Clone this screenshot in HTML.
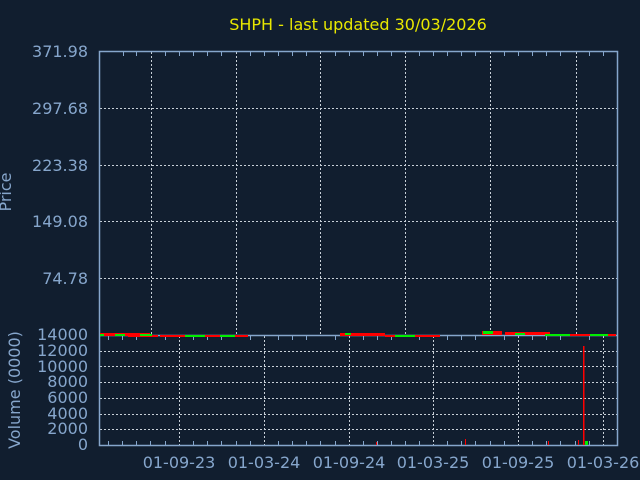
<!DOCTYPE html>
<html><head><meta charset="utf-8"><style>
html,body{margin:0;padding:0;background:#111e2f;}
svg{display:block}
text{font-family:"DejaVu Sans","Liberation Sans",sans-serif;}
</style></head><body>
<svg width="640" height="480" xmlns="http://www.w3.org/2000/svg">
<rect width="640" height="480" fill="#111e2f"/>
<text x="358" y="30" fill="#e8e800" font-size="16" text-anchor="middle">SHPH - last updated 30/03/2026</text>
<g fill="#86a6cc" font-size="16" text-anchor="end">
<text x="88" y="57">371.98</text>
<text x="88" y="114">297.68</text>
<text x="88" y="171">223.38</text>
<text x="88" y="227">149.08</text>
<text x="88" y="284">74.78</text>
<text x="88" y="340">14000</text>
<text x="88" y="356">12000</text>
<text x="88" y="372">10000</text>
<text x="88" y="387">8000</text>
<text x="88" y="403">6000</text>
<text x="88" y="419">4000</text>
<text x="88" y="434">2000</text>
<text x="88" y="450">0</text>
</g>
<g fill="#86a6cc" font-size="16" text-anchor="middle">
<text x="179" y="468">01-09-23</text>
<text x="264" y="468">01-03-24</text>
<text x="349" y="468">01-09-24</text>
<text x="433" y="468">01-03-25</text>
<text x="518" y="468">01-09-25</text>
<text x="603" y="468">01-03-26</text>
<text transform="translate(11,192) rotate(-90)">Price</text>
<text transform="translate(20,390) rotate(-90)">Volume (0000)</text>
</g>
<g stroke="#c8d0d8" stroke-dasharray="2,2" stroke-width="1" fill="none">
<path d="M151.5 52V335M236.5 52V335M320.5 52V335M405.5 52V335M490.5 52V335M576.5 52V335"/>
<path d="M100 108.5H617M100 165.5H617M100 221.5H617M100 278.5H617"/>
<path d="M179.5 336V445M264.5 336V445M349.5 336V445M433.5 336V445M518.5 336V445M603.5 336V445"/>
<path d="M100 351.5H617M100 366.5H617M100 382.5H617M100 398.5H617M100 414.5H617M100 429.5H617"/>
</g>
<g stroke="#86a6cc" stroke-width="1.5" fill="none">
<rect x="99.5" y="51.5" width="518" height="394"/>
<path d="M99 335.5H618"/>
</g>
<g stroke="#86a6cc" stroke-width="1">
<path d="M108.5 335V340M122.5 335V340M136.5 335V340M165.5 335V340M193.5 335V340M207.5 335V340M221.5 335V340M250.5 335V340M278.5 335V340M292.5 335V340M306.5 335V340M335.5 335V340M363.5 335V340M377.5 335V340M391.5 335V340M419.5 335V340M447.5 335V340M461.5 335V340M475.5 335V340M504.5 335V340M532.5 335V340M546.5 335V340M560.5 335V340M589.5 335V340"/>
<path d="M108.5 445V441M122.5 445V441M136.5 445V441M150.5 445V441M165.5 445V441M193.5 445V441M207.5 445V441M221.5 445V441M236.5 445V441M250.5 445V441M278.5 445V441M292.5 445V441M306.5 445V441M320.5 445V441M335.5 445V441M363.5 445V441M377.5 445V441M391.5 445V441M405.5 445V441M419.5 445V441M447.5 445V441M461.5 445V441M475.5 445V441M490.5 445V441M504.5 445V441M532.5 445V441M546.5 445V441M560.5 445V441M575.5 445V441M589.5 445V441"/>
<path d="M123.5 52V56M136.5 52V56M165.5 52V56M179.5 52V56M193.5 52V56M207.5 52V56M221.5 52V56M250.5 52V56M264.5 52V56M278.5 52V56M292.5 52V56M306.5 52V56M335.5 52V56M349.5 52V56M363.5 52V56M377.5 52V56M391.5 52V56M419.5 52V56M433.5 52V56M447.5 52V56M461.5 52V56M475.5 52V56M504.5 52V56M518.5 52V56M532.5 52V56M546.5 52V56M560.5 52V56M589.5 52V56M603.5 52V56"/>
</g>
<g fill="#ff0000">
<rect x="100" y="333" width="50" height="3"/>
<rect x="128" y="335" width="30" height="2"/>
<rect x="160" y="335" width="88" height="2"/>
<rect x="340" y="333" width="45" height="3"/>
<rect x="385" y="335" width="55" height="2"/>
<rect x="482" y="331" width="20" height="4"/>
<rect x="505" y="332" width="45" height="3"/>
<rect x="550" y="334" width="66" height="2"/>
<rect x="583" y="346" width="1.5" height="99"/>
<rect x="376" y="442" width="1" height="3"/>
<rect x="465" y="439" width="1" height="6"/>
<rect x="548" y="441" width="1" height="4"/>
<rect x="578" y="440" width="1" height="5"/>
</g>
<g fill="#00ee00">
<rect x="100" y="334" width="4" height="2"/>
<rect x="115" y="334" width="10" height="2"/>
<rect x="140" y="334" width="12" height="2"/>
<rect x="185" y="335" width="20" height="2"/>
<rect x="220" y="335" width="15" height="2"/>
<rect x="345" y="333" width="6" height="2"/>
<rect x="395" y="335" width="20" height="2"/>
<rect x="483" y="331" width="10" height="3"/>
<rect x="515" y="333" width="10" height="2"/>
<rect x="545" y="334" width="25" height="2"/>
<rect x="590" y="334" width="18" height="2"/>
<rect x="585" y="441" width="3" height="4"/>
</g>
</svg>
</body></html>
